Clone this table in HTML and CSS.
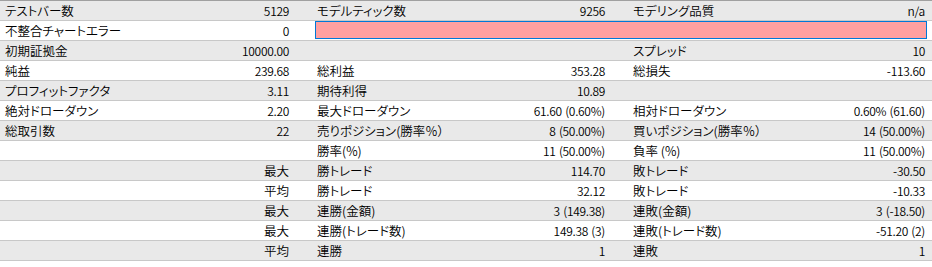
FILE: index.html
```html
<!DOCTYPE html>
<html lang="ja">
<head>
<meta charset="utf-8">
<title>テスト結果</title>
<link rel="stylesheet" href="styles.css">
</head>
<body>
<div class="report">
  <div class="row alt">
    <div class="lbl l1">テストバー数</div><div class="val v1">5129</div>
    <div class="lbl l2">モデルティック数</div><div class="val v2">9256</div>
    <div class="lbl l3">モデリング品質</div><div class="val v3">n/a</div>
  </div>
  <div class="row">
    <div class="lbl l1">不整合チャートエラー</div><div class="val v1">0</div>
    <div class="errbar"></div>
  </div>
  <div class="row alt">
    <div class="lbl l1">初期証拠金</div><div class="val v1">10000.00</div>
    <div class="lbl l2"></div><div class="val v2"></div>
    <div class="lbl l3">スプレッド</div><div class="val v3">10</div>
  </div>
  <div class="row">
    <div class="lbl l1">純益</div><div class="val v1">239.68</div>
    <div class="lbl l2">総利益</div><div class="val v2">353.28</div>
    <div class="lbl l3">総損失</div><div class="val v3">-113.60</div>
  </div>
  <div class="row alt">
    <div class="lbl l1">プロフィットファクタ</div><div class="val v1">3.11</div>
    <div class="lbl l2">期待利得</div><div class="val v2">10.89</div>
    <div class="lbl l3"></div><div class="val v3"></div>
  </div>
  <div class="row">
    <div class="lbl l1">絶対ドローダウン</div><div class="val v1">2.20</div>
    <div class="lbl l2">最大ドローダウン</div><div class="val v2">61.60 (0.60%)</div>
    <div class="lbl l3">相対ドローダウン</div><div class="val v3">0.60% (61.60)</div>
  </div>
  <div class="row alt">
    <div class="lbl l1">総取引数</div><div class="val v1">22</div>
    <div class="lbl l2">売りポジション(勝率％）</div><div class="val v2">8 (50.00%)</div>
    <div class="lbl l3">買いポジション(勝率％）</div><div class="val v3">14 (50.00%)</div>
  </div>
  <div class="row">
    <div class="lbl l1"></div><div class="val v1"></div>
    <div class="lbl l2">勝率(%)</div><div class="val v2">11 (50.00%)</div>
    <div class="lbl l3">負率 (%)</div><div class="val v3">11 (50.00%)</div>
  </div>
  <div class="row alt">
    <div class="lbl l1"></div><div class="val v1 cjk">最大</div>
    <div class="lbl l2">勝トレード</div><div class="val v2">114.70</div>
    <div class="lbl l3">敗トレード</div><div class="val v3">-30.50</div>
  </div>
  <div class="row">
    <div class="lbl l1"></div><div class="val v1 cjk">平均</div>
    <div class="lbl l2">勝トレード</div><div class="val v2">32.12</div>
    <div class="lbl l3">敗トレード</div><div class="val v3">-10.33</div>
  </div>
  <div class="row alt">
    <div class="lbl l1"></div><div class="val v1 cjk">最大</div>
    <div class="lbl l2">連勝(金額)</div><div class="val v2">3 (149.38)</div>
    <div class="lbl l3">連敗(金額)</div><div class="val v3">3 (-18.50)</div>
  </div>
  <div class="row">
    <div class="lbl l1"></div><div class="val v1 cjk">最大</div>
    <div class="lbl l2">連勝(トレード数)</div><div class="val v2">149.38 (3)</div>
    <div class="lbl l3">連敗(トレード数)</div><div class="val v3">-51.20 (2)</div>
  </div>
  <div class="row alt">
    <div class="lbl l1"></div><div class="val v1 cjk">平均</div>
    <div class="lbl l2">連勝</div><div class="val v2">1</div>
    <div class="lbl l3">連敗</div><div class="val v3">1</div>
  </div>
</div>
</body>
</html>
```

FILE: styles.css
```css
html, body {
  margin: 0;
  padding: 0;
  background: #ffffff;
}

body {
  width: 932px;
  height: 267px;
  overflow: hidden;
  font-family: "Noto Sans CJK JP", "Noto Sans", sans-serif;
  font-weight: 350;
  color: #000000;
}

.report {
  border-top: 1px solid #a0a0a0;
}

.row {
  display: grid;
  grid-template-columns: 150px 144px 160px 156px 160px 162px;
  height: 19px;
  border-bottom: 1px solid #c8c8c8;
  background: #ffffff;
}

.row.alt {
  background: #e9e9e9;
}

.lbl,
.val {
  line-height: 19px;
  white-space: nowrap;
  overflow: hidden;
}

.lbl {
  font-size: 12.5px;
  font-feature-settings: "palt";
}

.l1 {
  padding-left: 5px;
}

.l2,
.l3 {
  padding-left: 23px;
}

.val {
  text-align: right;
  font-size: 12px;
  letter-spacing: -0.3px;
  word-spacing: 1px;
}

.val.cjk {
  font-size: 12.5px;
  letter-spacing: 0;
}

.v1,
.v2 {
  padding-right: 5px;
}

.v3 {
  padding-right: 7px;
}

.errbar {
  grid-column: 3 / 7;
  margin: 0 5px 0 21px;
  height: 18px;
  box-sizing: border-box;
  border: 1px solid #0078d7;
  background: #ffa0a0;
}
```
